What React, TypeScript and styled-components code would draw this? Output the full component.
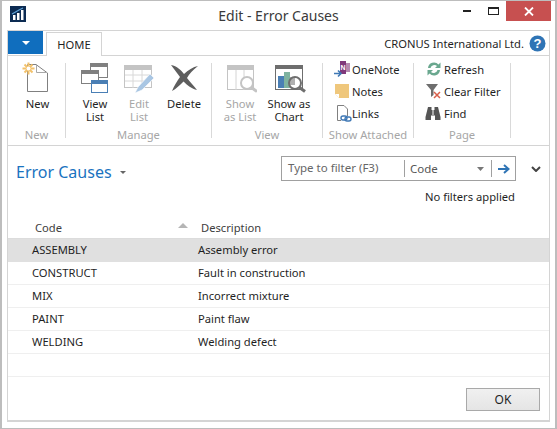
import React from "react";
import styled, { createGlobalStyle } from "styled-components";

const Global = createGlobalStyle`
  html, body { margin: 0; padding: 0; background: #fff; }
  body { font-family: "Noto Sans", "Open Sans", sans-serif; font-size: 11.2px; color: #1f1f1f; }
  * { box-sizing: border-box; }
`;

const Window = styled.div`
  width: 557px; height: 429px; display: flex; flex-direction: column;
  border: 1px solid #bdbdbd; border-left-width: 2px; border-right-width: 2px; background: #fff;
`;
const TitleBar = styled.div`
  height: 29px; flex: none; display: flex; align-items: flex-start; position: relative; padding: 5px 0 0 8px;
`;
const Title = styled.div`
  position: absolute; left: 0; right: 0; top: 5px; text-align: center; font-size: 14px; line-height: 20px; color: #3a3a3a;
`;
const WinControls = styled.div`
  margin-left: auto; display: flex; align-items: flex-start; margin-top: -5px; margin-right: 4px;
`;
const WinBtn = styled.div`
  width: 26px; height: 20px; display: flex; align-items: center; justify-content: center;
`;
const CloseBtn = styled.div`
  width: 45px; height: 20px; background: #c75050; display: flex; align-items: center; justify-content: center;
`;
const Panel = styled.div`
  flex: 1; margin: 0 5px 6px 5px; border: 1px solid #d4d4d4; border-bottom-width: 2px; display: flex; flex-direction: column; min-height: 0;
`;
const TabRow = styled.div`
  height: 25px; flex: none; display: flex; align-items: flex-end; border-bottom: 1px solid #d4d4d4; padding-right: 3px;
`;
const FileBtn = styled.div`
  width: 35px; height: 23px; background: #106ebe; display: flex; align-items: center; justify-content: center; margin-bottom: 1px;
`;
const Tab = styled.div`
  width: 56px; height: 24px; margin-left: 3px; margin-bottom: -1px; background: #fff; border: 1px solid #d4d4d4; border-bottom: none;
  display: flex; align-items: center; justify-content: center; color: #1f1f1f;
`;
const Company = styled.div`
  margin-left: auto; display: flex; align-items: center; gap: 5px; height: 24px; color: #1f1f1f;
`;
const Ribbon = styled.div`
  height: 90px; flex: none; display: flex; border-bottom: 1px solid #d4d4d4; padding-top: 7px;
`;
const Group = styled.div<{ $w: number }>`
  width: ${p => p.$w}px; height: 75px; flex: none; border-right: 1px solid #d9d9d9; display: flex; flex-direction: column;
`;
const GroupItems = styled.div`
  flex: 1; display: flex; padding-left: 2px; min-height: 0;
`;
const GroupLabel = styled.div`
  height: 15px; flex: none; text-align: center; color: #a6a6a6; line-height: 15px; white-space: nowrap; margin-bottom: -4px; margin-top: 4px;
`;
const Large = styled.div<{ $w: number; $off?: boolean }>`
  width: ${p => p.$w}px; flex: none; display: flex; flex-direction: column; align-items: center;
  text-align: center; color: ${p => (p.$off ? "#a6a6a6" : "#1f1f1f")};
`;
const IconSlot = styled.div`
  height: 35px; margin-top: -1px; flex: none;
  svg { display: block; }
`;
const Line = styled.div`
  height: 13px; line-height: 13px; white-space: nowrap; overflow: visible;
`;
const SmallCol = styled.div`
  display: flex; flex-direction: column; padding-left: 9px; margin-top: -5px;
`;
const Small = styled.div<{ $gap: number }>`
  height: 22px; flex: none; display: flex; align-items: center; gap: ${p => p.$gap}px; white-space: nowrap; color: #1f1f1f;
`;
const Content = styled.div`
  flex: 1; display: flex; flex-direction: column; min-height: 0;
`;
const Head = styled.div`
  height: 71px; flex: none; display: flex; justify-content: space-between; padding: 10px 8px 0 8px;
`;
const PageTitle = styled.div`
  font-size: 16px; color: #1a73c0; line-height: 30px; display: flex; align-items: center; gap: 8px; height: 30px; margin-top: 1px;
`;
const FilterCol = styled.div`
  display: flex; flex-direction: column; align-items: flex-end;
`;
const FilterLine = styled.div`
  display: flex; align-items: center; gap: 15px;
`;
const FilterBox = styled.div`
  width: 235px; height: 25px; border: 1px solid #a0a0a0; display: flex; align-items: center; color: #666;
`;
const FilterInput = styled.div`
  width: 123px; padding-left: 6px; height: 17px; line-height: 15px; border-right: 1px solid #a0a0a0; flex: none; font-size: 11.5px;
`;
const FilterField = styled.div`
  flex: 1; display: flex; align-items: center; justify-content: space-between; padding: 0 7px 0 5px; color: #555; height: 17px; font-size: 11.5px;
`;
const FilterGo = styled.div`
  width: 24px; height: 17px; flex: none; border-left: 1px solid #a0a0a0; display: flex; align-items: center; justify-content: center;
`;
const NoFilters = styled.div`
  line-height: 16px; margin-top: 8px; margin-right: 26px; color: #1f1f1f;
`;
const Grid = styled.div`
  flex: 1; display: flex; flex-direction: column;
`;
const Row = styled.div<{ $head?: boolean; $sel?: boolean }>`
  display: grid; grid-template-columns: 166px 1fr; flex: none; align-items: center;
  height: ${p => (p.$head ? 22 : 23)}px;
  padding-left: ${p => (p.$head ? 27 : 24)}px;
  padding-bottom: ${p => (p.$head ? 0 : 2)}px;
  background: ${p => (p.$sel ? "#e0e0e0" : "transparent")};
  border-bottom: ${p => (p.$head ? "1px solid #dcdcdc" : p.$sel ? "none" : "1px solid #efefef")};
`;
const HeadCell = styled.div`
  display: flex; justify-content: space-between; color: #3d3d3d; align-items: center;
`;
const SortMark = styled.span`
  width: 0; height: 0; border-left: 5px solid transparent; border-right: 5px solid transparent; border-bottom: 5px solid #b5b5b5;
  margin-right: 13px; margin-top: -4px;
`;
const Footer = styled.div`
  flex: none; height: 43px; display: flex; justify-content: flex-end; align-items: flex-start; padding: 11px 9px 0 0;
`;
const OkButton = styled.div`
  width: 74px; height: 23px; border: 1px solid #a9a9a9; background: linear-gradient(#f0f0f0, #e5e5e5);
  display: flex; align-items: center; justify-content: center; font-size: 12px; color: #1f1f1f;
`;

const Logo = () => (
  <svg width="16" height="16" viewBox="0 0 16 16">
    <rect width="16" height="16" fill="#0c2b52" />
    <rect x="3" y="9" width="2.5" height="5" fill="#fff" />
    <rect x="7" y="7" width="2.5" height="7" fill="#fff" />
    <rect x="11" y="4" width="2.5" height="10" fill="#fff" />
    <path d="M2 8 L9 4 L13 2" stroke="#5fa3d8" strokeWidth="1.2" fill="none" />
  </svg>
);
const NewIcon = () => (
  <svg width="32" height="32" viewBox="0 0 32 32">
    <path d="M5.5 2.5H14L25.5 11V29.5H5.5Z" fill="#fff" stroke="#808080" />
    <path d="M14.5 2.5V10.5H25" fill="none" stroke="#a8a8a8" />
    <g stroke="#f3c26b" strokeWidth="2">
      <path d="M6.5 0.5V12.5M0.5 6.5H12.5M2.5 2.5L10.5 10.5M10.5 2.5L2.5 10.5" />
    </g>
    <circle cx="6.5" cy="6.5" r="2" fill="#fff" />
  </svg>
);
const ViewListIcon = () => (
  <svg width="28" height="32" viewBox="0 0 28 32">
    <rect x="9.5" y="1.5" width="17" height="14" fill="#fff" stroke="#808080" />
    <rect x="9" y="1" width="18" height="4" fill="#808080" />
    <rect x="0.5" y="8.5" width="17" height="13" fill="#fff" stroke="#808080" />
    <rect x="0" y="8" width="18" height="4" fill="#808080" />
    <rect x="10.5" y="18.5" width="16" height="12" fill="#fff" stroke="#4a7fb5" />
    <rect x="10" y="18" width="17" height="4" fill="#4a7fb5" />
  </svg>
);
const EditListIcon = () => (
  <svg width="30" height="32" viewBox="0 0 30 32">
    <rect x="0.5" y="3.5" width="27" height="22" fill="#fff" stroke="#c4c4c4" />
    <rect x="0" y="3" width="28" height="5" fill="#c4c4c4" />
    <path d="M1 13H28M1 19H28M9 8V26M18 8V26" stroke="#d8d8d8" />
    <path d="M11 31L14 25L26 12L30 16L18 28Z" fill="#a9c6e3" stroke="#fff" strokeWidth=".6" />
  </svg>
);
const DeleteIcon = () => (
  <svg width="30" height="32" viewBox="0 0 30 32">
    <path transform="translate(0 1)" d="M2 2C8 3 12 7 15 11C19 7 24 4 29 3C24 7 20 11 18 15C21 19 25 23 28 27C23 26 18 22 14.5 18.5C11 22 7 26 3 28C5 23 8 18 11 14C8 10 5 6 2 2Z" fill="#5e5e5e" />
  </svg>
);
const ShowListIcon = () => (
  <svg width="34" height="32" viewBox="0 0 34 32">
    <rect x="4.5" y="3.5" width="26" height="24" fill="#fff" stroke="#c4c4c4" />
    <rect x="4" y="3" width="27" height="5" fill="#c4c4c4" />
    <path d="M13 8V28M21 8V28" stroke="#d4d4d4" />
    <circle cx="24" cy="21" r="6" fill="#fff" stroke="#c4c4c4" strokeWidth="2" />
    <path d="M28.5 25.5L34 29.5" stroke="#c4c4c4" strokeWidth="3" />
  </svg>
);
const ChartIcon = () => (
  <svg width="34" height="32" viewBox="0 0 34 32">
    <rect x="3.5" y="3.5" width="27" height="24" fill="#fff" stroke="#6e6e6e" />
    <rect x="3" y="3" width="28" height="4" fill="#6e6e6e" />
    <rect x="6" y="14" width="6" height="12" fill="#4a7fb5" />
    <rect x="12" y="10" width="6" height="16" fill="#7fb3a0" />
    <rect x="18" y="15" width="5" height="8" fill="#b0b0b0" />
    <circle cx="23" cy="21" r="6" fill="none" stroke="#6e6e6e" strokeWidth="2" />
    <path d="M27.5 25.5L33 29.5" stroke="#6e6e6e" strokeWidth="3" />
  </svg>
);
const OneNoteIcon = () => (
  <svg width="18" height="18" viewBox="0 0 18 18">
    <rect x="6" y="1" width="6" height="13" fill="#80397b" />
    <rect x="12" y="3" width="4" height="9" fill="#b58ab0" />
    <text x="6.5" y="10" fontSize="7" fontWeight="700" fill="#fff" fontFamily="Liberation Sans">N</text>
    <path d="M0 13.5H6.5M4 10.5L7 13.5L4 16.5" stroke="#3f78b5" strokeWidth="1.6" fill="none" />
  </svg>
);
const NotesIcon = () => (
  <svg width="18" height="18" viewBox="0 0 18 18">
    <path d="M1 2H15V16H5L1 12Z" fill="#efc77c" />
    <path d="M1 12H5V16Z" fill="#fff" />
  </svg>
);
const LinksIcon = () => (
  <svg width="18" height="18" viewBox="0 0 18 18">
    <path d="M3.5 1.5H10L13.5 5V12M3.5 1.5V16.5H7" fill="none" stroke="#808080" />
    <g fill="none" stroke="#3f78b5" strokeWidth="1.4">
      <rect x="7" y="12" width="6" height="4" rx="2" />
      <rect x="11" y="13" width="6" height="4" rx="2" />
    </g>
  </svg>
);
const RefreshIcon = () => (
  <svg width="17" height="16" viewBox="0 0 17 16">
    <path d="M3 7A6 6 0 0 1 13.5 3.5L15.5 1.5V7H10L12 5A4 4 0 0 0 5.5 7Z" fill="#6aa88f" />
    <path d="M15 9A6 6 0 0 1 4.5 12.5L2.5 14.5V9H8L6 11A4 4 0 0 0 12.5 9Z" fill="#6aa88f" />
  </svg>
);
const ClearIcon = () => (
  <svg width="17" height="17" viewBox="0 0 17 17">
    <path d="M1 1H13L8.5 7V12L6 14V7Z" fill="#6e6e6e" />
    <path d="M9 9L15 15M15 9L9 15" stroke="#d9604c" strokeWidth="1.5" />
  </svg>
);
const FindIcon = () => (
  <svg width="17" height="15" viewBox="0 0 17 15">
    <path d="M3 1H6.5V4H7.5V9H8.5V4H9.5V1H13L15.5 11V14H10V9.5H6V14H0.5V11Z" fill="#555" />
  </svg>
);

const Tri = ({ c = "#666", w = 8, h = 4 }: { c?: string; w?: number; h?: number }) => (
  <svg width={w} height={h} viewBox={`0 0 ${w} ${h}`}><path d={`M0 0H${w}L${w / 2} ${h}Z`} fill={c} /></svg>
);

const rows = [
  ["ASSEMBLY", "Assembly error"],
  ["CONSTRUCT", "Fault in construction"],
  ["MIX", "Incorrect mixture"],
  ["PAINT", "Paint flaw"],
  ["WELDING", "Welding defect"],
  ["", ""],
];

export default function App() {
  return (
    <Window>
      <Global />
      <TitleBar>
        <Logo />
        <Title>Edit - Error Causes</Title>
        <WinControls>
          <WinBtn><svg width="8" height="2"><rect width="8" height="2" fill="#222" /></svg></WinBtn>
          <WinBtn><svg width="11" height="8"><rect x=".5" y=".5" width="10" height="7" fill="none" stroke="#222" /><rect width="11" height="2" fill="#222" /></svg></WinBtn>
          <CloseBtn><svg width="10" height="9"><path d="M1 0.5L9 8.5M9 0.5L1 8.5" stroke="#fff" strokeWidth="1.8" /></svg></CloseBtn>
        </WinControls>
      </TitleBar>
      <Panel>
        <TabRow>
          <FileBtn><Tri c="#fff" /></FileBtn>
          <Tab>HOME</Tab>
          <Company>
            CRONUS International Ltd.
            <svg width="17" height="17" viewBox="0 0 17 17">
              <circle cx="8.5" cy="8.5" r="8" fill="#2f74b5" />
              <text x="8.5" y="13" textAnchor="middle" fontSize="13" fontWeight="700" fill="#fff" fontFamily="Liberation Sans">?</text>
            </svg>
          </Company>
        </TabRow>
        <Ribbon>
          <Group $w={58}>
            <GroupItems>
              <Large $w={55}><IconSlot><NewIcon /></IconSlot><Line>New</Line></Large>
            </GroupItems>
            <GroupLabel>New</GroupLabel>
          </Group>
          <Group $w={146}>
            <GroupItems>
              <Large $w={54}><IconSlot><ViewListIcon /></IconSlot><Line>View</Line><Line>List</Line></Large>
              <Large $w={34} $off><IconSlot><EditListIcon /></IconSlot><Line>Edit</Line><Line>List</Line></Large>
              <Large $w={56}><IconSlot><DeleteIcon /></IconSlot><Line>Delete</Line></Large>
            </GroupItems>
            <GroupLabel>Manage</GroupLabel>
          </Group>
          <Group $w={111}>
            <GroupItems>
              <Large $w={52} $off><IconSlot><ShowListIcon /></IconSlot><Line>Show</Line><Line>as List</Line></Large>
              <Large $w={46}><IconSlot><ChartIcon /></IconSlot><Line>Show as</Line><Line>Chart</Line></Large>
            </GroupItems>
            <GroupLabel>View</GroupLabel>
          </Group>
          <Group $w={91}>
            <GroupItems>
              <SmallCol>
                <Small $gap={0}><OneNoteIcon />OneNote</Small>
                <Small $gap={0}><NotesIcon />Notes</Small>
                <Small $gap={0}><LinksIcon />Links</Small>
              </SmallCol>
            </GroupItems>
            <GroupLabel>Show Attached</GroupLabel>
          </Group>
          <Group $w={97}>
            <GroupItems>
              <SmallCol>
                <Small $gap={2}><RefreshIcon />Refresh</Small>
                <Small $gap={2}><ClearIcon />Clear Filter</Small>
                <Small $gap={2}><FindIcon />Find</Small>
              </SmallCol>
            </GroupItems>
            <GroupLabel>Page</GroupLabel>
          </Group>
        </Ribbon>
        <Content>
          <Head>
            <PageTitle>Error Causes <Tri c="#666" w={6} h={3} /></PageTitle>
            <FilterCol>
              <FilterLine>
                <FilterBox>
                  <FilterInput>Type to filter (F3)</FilterInput>
                  <FilterField>Code <Tri c="#777" w={7} h={4} /></FilterField>
                  <FilterGo>
                    <svg width="12" height="10" viewBox="0 0 12 10"><path d="M0 5H10M6 1L10.5 5L6 9" fill="none" stroke="#2f74b5" strokeWidth="2" /></svg>
                  </FilterGo>
                </FilterBox>
                <svg width="10" height="6" viewBox="0 0 10 6"><path d="M1 1L5 5L9 1" fill="none" stroke="#444" strokeWidth="2" /></svg>
              </FilterLine>
              <NoFilters>No filters applied</NoFilters>
            </FilterCol>
          </Head>
          <Grid>
            <Row $head>
              <HeadCell>Code <SortMark /></HeadCell>
              <HeadCell>Description</HeadCell>
            </Row>
            {rows.map((r, i) => (
              <Row key={i} $sel={i === 0}>
                <div>{r[0]}</div>
                <div>{r[1]}</div>
              </Row>
            ))}
          </Grid>
          <Footer><OkButton>OK</OkButton></Footer>
        </Content>
      </Panel>
    </Window>
  );
}
